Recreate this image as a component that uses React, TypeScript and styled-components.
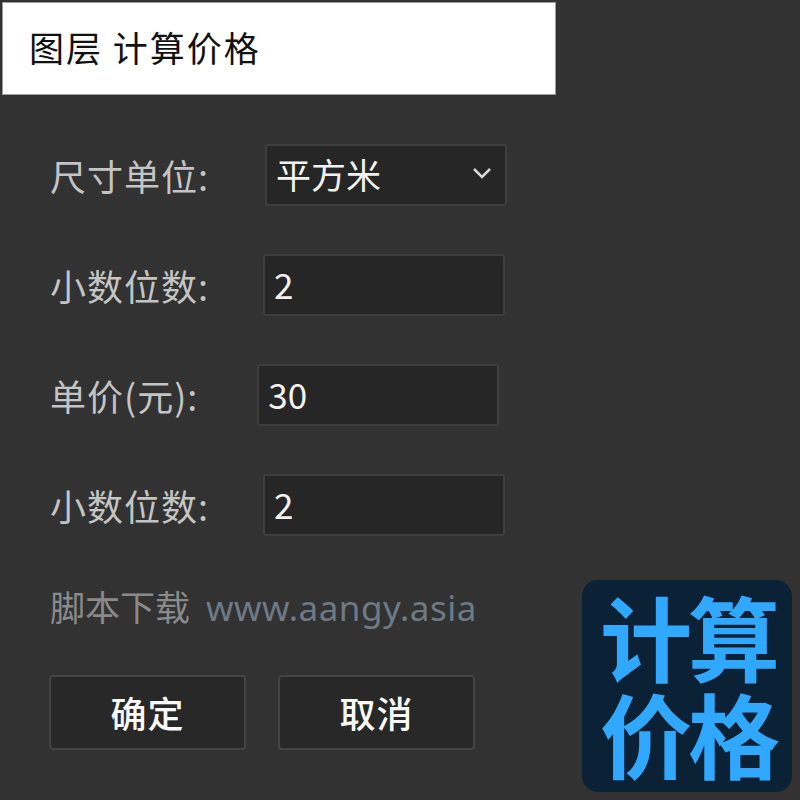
import styled, { createGlobalStyle } from "styled-components";

const GlobalStyle = createGlobalStyle`
    html, body {
        margin: 0;
        padding: 0;
        background: #323232;
    }
    body {
        font-family: "Noto Sans CJK SC", "Noto Sans", sans-serif;
    }
`;

const Page = styled.div`
    position: relative;
    width: 800px;
    height: 800px;
    background: #323232;
    overflow: hidden;
`;

const TitleBar = styled.div`
    margin: 2px 0 0 2px;
    width: 554px;
    height: 93px;
    box-sizing: border-box;
    background: #ffffff;
    border: 1px solid #9c9c9c;
    display: flex;
    align-items: center;
    padding-left: 26px;
    padding-bottom: 4px;
    font-size: 35px;
    color: #111;
    letter-spacing: 2px;
`;

const Form = styled.div`
    display: flex;
    flex-direction: column;
    padding: 49px 0 0 50px;
`;

const Row = styled.div<{ $gap: number }>`
    display: flex;
    align-items: center;
    gap: ${(p) => p.$gap}px;
    margin-bottom: 48px;
`;

const Label = styled.span`
    font-size: 36px;
    color: #c4c4c4;
    letter-spacing: 1px;
    white-space: nowrap;
`;

const Field = styled.div`
    width: 242px;
    height: 62px;
    box-sizing: border-box;
    background: #262626;
    border: 2px solid #3e3e3e;
    border-radius: 3px;
    display: flex;
    align-items: center;
    justify-content: space-between;
    padding: 0 12px 4px 9px;
    font-size: 35px;
    color: #f2f2f2;
`;

const Footer = styled.div`
    font-size: 35px;
    color: #8a8a8a;
    margin: -4px 0 0 0;
`;

const Url = styled.span`
    color: #6e7a85;
    font-family: "Noto Sans", sans-serif;
    margin-left: 16px;
    letter-spacing: 0.5px;
`;

const Buttons = styled.div`
    display: flex;
    gap: 32px;
    margin: 44px 0 0 -1px;
`;

const Button = styled.div`
    width: 197px;
    height: 75px;
    box-sizing: border-box;
    background: #282828;
    border: 2px solid #444;
    border-radius: 4px;
    display: flex;
    align-items: center;
    justify-content: center;
    padding-bottom: 2px;
    font-size: 36px;
    font-weight: 500;
    color: #fafafa;
    letter-spacing: 1px;
`;

const Badge = styled.div`
    position: absolute;
    left: 582px;
    top: 580px;
    width: 210px;
    height: 212px;
    box-sizing: border-box;
    border-radius: 16px;
    background: #0b2136;
    color: #31a8ff;
    font-size: 92px;
    font-weight: 700;
    line-height: 97px;
    display: flex;
    flex-direction: column;
    align-items: center;
    justify-content: center;
    letter-spacing: -4px;
    padding: 0 0 6px 2px;
`;

export default function App() {
    return (
        <Page>
            <GlobalStyle />
            <TitleBar>图层 计算价格</TitleBar>
            <Form>
                <Row $gap={56}>
                    <Label>尺寸单位:</Label>
                    <Field>
                        平方米
                        <svg width="22" height="14" viewBox="0 0 22 14">
                            <path d="M3 3 L11 11 L19 3" fill="none" stroke="#d8d8d8" strokeWidth="2.5" />
                        </svg>
                    </Field>
                </Row>
                <Row $gap={54}>
                    <Label>小数位数:</Label>
                    <Field>2</Field>
                </Row>
                <Row $gap={59}>
                    <Label>单价(元):</Label>
                    <Field>30</Field>
                </Row>
                <Row $gap={54}>
                    <Label>小数位数:</Label>
                    <Field>2</Field>
                </Row>
                <Footer>
                    脚本下载<Url>www.aangy.asia</Url>
                </Footer>
                <Buttons>
                    <Button>确定</Button>
                    <Button>取消</Button>
                </Buttons>
            </Form>
            <Badge>
                <span>计算</span>
                <span>价格</span>
            </Badge>
        </Page>
    );
}
